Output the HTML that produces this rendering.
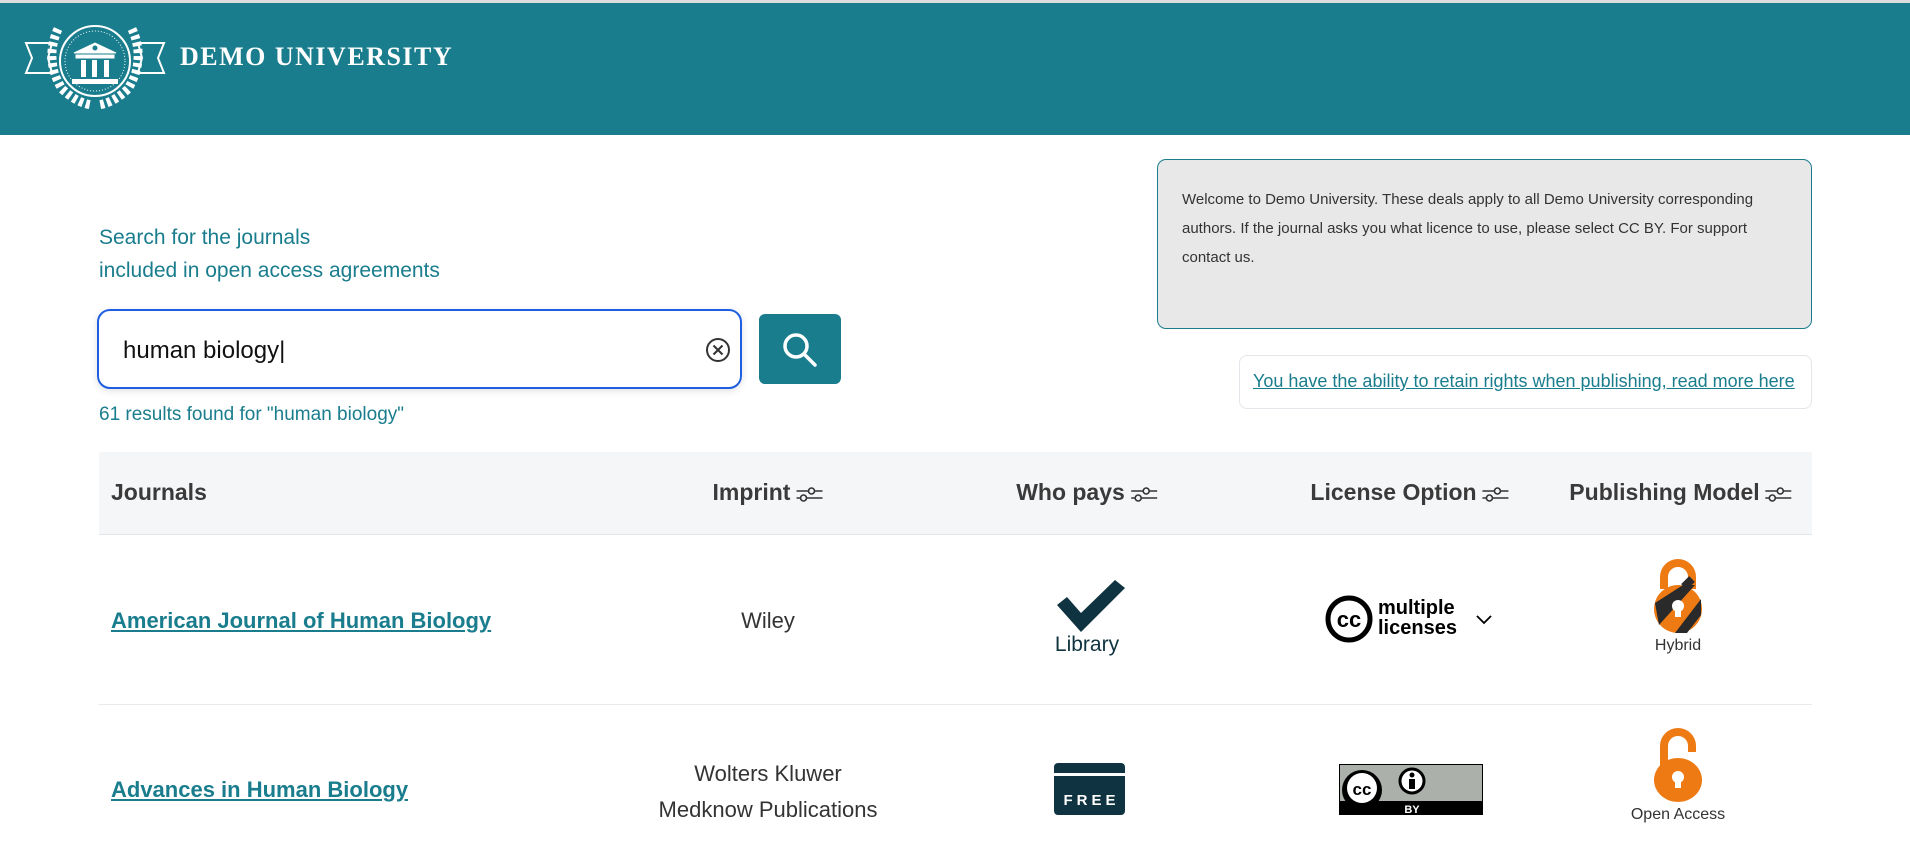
<!DOCTYPE html>
<html><head><meta charset="utf-8"><style>
*{margin:0;padding:0;box-sizing:border-box}
body{width:1910px;height:857px;overflow:hidden;background:#fff;font-family:"Liberation Sans",sans-serif;position:relative;color:#333}
.a{position:absolute}
.hdr{left:0;top:0;width:1910px;height:135px;background:#1a7d8d;border-top:3px solid #ddd}
.th{font-size:23px;font-weight:bold;color:#3a3a3a;top:479px;white-space:nowrap}
.c{transform:translateX(-50%);text-align:center;white-space:nowrap}
.lnk{color:#1a7d8d;font-weight:bold;font-size:22px;text-decoration:underline;left:111px}
.sl{display:inline-block;vertical-align:middle;margin-left:5px}
</style></head><body>
<div class="a hdr"></div>
<svg class="a" style="left:24px;top:15px" width="142" height="95" viewBox="0 0 142 95" fill="none" stroke="#fff">
<path d="M2 28h26l-4 15 4 15H2l6-15z" fill="#1a7d8d" stroke-width="2"/>
<path d="M140 28h-26l4 15-4 15h26l-6-15z" fill="#1a7d8d" stroke-width="2"/>
<path d="M34 14q-14 30 4 60q15 14 30 16M108 14q14 30-4 60q-15 14-30 16" stroke-width="9" stroke-dasharray="4 3"/>
<circle cx="71" cy="46" r="38" fill="#1a7d8d" stroke="none"/>
<circle cx="71" cy="46" r="35" stroke-width="2"/>
<circle cx="71" cy="46" r="30" stroke-width="1" stroke-dasharray="1 2"/>
<path d="M50 38l21-10 21 10z" fill="#fff"/>
<circle cx="71" cy="33" r="3" fill="#1a7d8d"/>
<rect x="52" y="40" width="38" height="3" fill="#fff"/>
<rect x="57" y="45" width="5" height="17" fill="#fff" stroke="none"/><rect x="68" y="45" width="5" height="17" fill="#fff" stroke="none"/><rect x="80" y="45" width="5" height="17" fill="#fff" stroke="none"/>
<rect x="48" y="64" width="46" height="5" fill="#fff" stroke="none"/>
</svg>
<div class="a" style="left:180px;top:42px;color:#fff;font-family:'Liberation Serif',serif;font-size:26px;font-weight:bold;letter-spacing:1.5px">DEMO UNIVERSITY</div>

<div class="a" style="left:99px;top:221px;color:#1a7d8d;font-size:21px;line-height:33px">Search for the journals<br>included in open access agreements</div>
<div class="a" style="left:97px;top:309px;width:645px;height:80px;border:2px solid #1d5fe0;border-radius:13px;box-shadow:0 2px 8px rgba(0,0,0,.12)"></div>
<div class="a" style="left:123px;top:337px;font-size:24px;color:#111">human biology|</div>
<svg class="a" style="left:705px;top:337px" width="26" height="26" viewBox="0 0 26 26" fill="none" stroke="#333" stroke-width="2"><circle cx="13" cy="13" r="11"/><path d="M8.5 8.5l9 9M17.5 8.5l-9 9"/></svg>
<div class="a" style="left:759px;top:314px;width:82px;height:70px;background:#1a7d8d;border-radius:6px"></div>
<svg class="a" style="left:780px;top:330px" width="40" height="40" viewBox="0 0 40 40" fill="none" stroke="#fff" stroke-width="3.5"><circle cx="16" cy="16" r="11"/><path d="M24 24l11 11" stroke-linecap="round"/></svg>
<div class="a" style="left:99px;top:404px;font-size:19px;color:#1a7d8d">61 results found for "human biology"</div>

<div class="a" style="left:1157px;top:159px;width:655px;height:170px;background:#e8e8e8;border:1px solid #1a7d8d;border-radius:9px;padding:25px 24px;font-size:15px;line-height:29px;color:#333">Welcome to Demo University. These deals apply to all Demo University corresponding authors. If the journal asks you what licence to use, please select CC BY. For support contact us.</div>
<div class="a" style="left:1239px;top:355px;width:573px;height:54px;border:1px solid #e3e6ea;border-radius:8px;padding:15px 0 0 13px;font-size:18px;color:#1a7d8d;text-decoration:underline">You have the ability to retain rights when publishing, read more here</div>

<div class="a" style="left:99px;top:452px;width:1713px;height:83px;background:#f5f6f8;border-bottom:1px solid #e3e6ea"></div>
<div class="a th" style="left:111px">Journals</div>
<div class="a th c" style="left:768px">Imprint<svg class="sl" width="28" height="20" viewBox="0 0 28 20" fill="none" stroke="#333" stroke-width="1.6"><path d="M1 7h12M19 7h8M1 14h4M11 14h16"/><circle cx="16" cy="7" r="3"/><circle cx="8" cy="14" r="3"/></svg></div>
<div class="a th c" style="left:1087px">Who pays<svg class="sl" width="28" height="20" viewBox="0 0 28 20" fill="none" stroke="#333" stroke-width="1.6"><path d="M1 7h12M19 7h8M1 14h4M11 14h16"/><circle cx="16" cy="7" r="3"/><circle cx="8" cy="14" r="3"/></svg></div>
<div class="a th c" style="left:1410px">License Option<svg class="sl" width="28" height="20" viewBox="0 0 28 20" fill="none" stroke="#333" stroke-width="1.6"><path d="M1 7h12M19 7h8M1 14h4M11 14h16"/><circle cx="16" cy="7" r="3"/><circle cx="8" cy="14" r="3"/></svg></div>
<div class="a th c" style="left:1681px">Publishing Model<svg class="sl" width="28" height="20" viewBox="0 0 28 20" fill="none" stroke="#333" stroke-width="1.6"><path d="M1 7h12M19 7h8M1 14h4M11 14h16"/><circle cx="16" cy="7" r="3"/><circle cx="8" cy="14" r="3"/></svg></div>

<div class="a" style="left:99px;top:704px;width:1713px;height:1px;background:#e8eaed"></div>

<div class="a lnk" style="top:608px">American Journal of Human Biology</div>
<div class="a c" style="left:768px;top:608px;font-size:22px">Wiley</div>
<svg class="a" style="left:1057px;top:580px" width="68" height="52" viewBox="0 0 68 52"><path d="M0 25l10-8 14 16L58 0l10 8-44 44z" fill="#0f3340"/></svg>
<div class="a c" style="left:1087px;top:633px;font-size:21px;color:#0f3340">Library</div>
<svg class="a" style="left:1325px;top:594px" width="50" height="50" viewBox="0 0 50 50"><circle cx="24" cy="25" r="21" fill="#fff" stroke="#000" stroke-width="5"/><text x="24" y="33" text-anchor="middle" font-family="Liberation Sans" font-weight="bold" font-size="22">cc</text></svg>
<div class="a" style="left:1378px;top:598px;font-size:20px;font-weight:bold;line-height:20px;color:#000">multiple<br>licenses</div>
<svg class="a" style="left:1476px;top:614px" width="16" height="12" viewBox="0 0 16 12" fill="none" stroke="#000" stroke-width="1.8"><path d="M1 2l7 7 7-7"/></svg>
<svg class="a" style="left:1653px;top:559px" width="50" height="74" viewBox="0 0 50 74"><path d="M11 30V18a14 14 0 0 1 28 0v12" fill="none" stroke="#ee7a14" stroke-width="8"/><ellipse cx="25" cy="50" rx="24" ry="24" fill="#ee7a14"/><path d="M2 44L30 26h12L6 66zM22 74L48 40v16L34 74z" fill="#2a2a2a"/><path d="M39 20l-8 8" stroke="#2a2a2a" stroke-width="8"/><circle cx="25" cy="47" r="6" fill="#fff"/><rect x="22" y="47" width="6" height="11" fill="#fff"/></svg>
<div class="a c" style="left:1678px;top:637px;font-size:16px;color:#333">Hybrid</div>

<div class="a lnk" style="top:777px">Advances in Human Biology</div>
<div class="a c" style="left:768px;top:756px;font-size:22px;line-height:36px">Wolters Kluwer<br>Medknow Publications</div>
<div class="a" style="left:1054px;top:763px;width:71px;height:52px;background:#0f3340;border-radius:4px"></div>
<div class="a" style="left:1054px;top:773px;width:71px;height:3px;background:#fff"></div>
<div class="a" style="left:1054px;top:792px;width:71px;text-align:center;color:#fff;font-weight:bold;font-size:15px;letter-spacing:4px;padding-left:4px">FREE</div>
<svg class="a" style="left:1339px;top:764px" width="144" height="51" viewBox="0 0 144 51"><rect x="0" y="0" width="144" height="51" fill="#abb1aa" stroke="#000" stroke-width="2"/><rect x="0" y="37" width="144" height="14" fill="#000"/><circle cx="23" cy="26" r="20" fill="#000"/><circle cx="23" cy="24" r="15" fill="#fff"/><text x="23" y="31" text-anchor="middle" font-family="Liberation Sans" font-weight="bold" font-size="17">cc</text><circle cx="73" cy="17" r="12" fill="#fff" stroke="#000" stroke-width="3"/><circle cx="73" cy="11" r="2.5"/><rect x="70" y="15" width="6" height="10"/><text x="73" y="49" text-anchor="middle" font-family="Liberation Sans" font-weight="bold" font-size="11" fill="#fff">BY</text></svg>
<svg class="a" style="left:1653px;top:728px" width="50" height="74" viewBox="0 0 50 74"><path d="M11 44V18a14 14 0 0 1 28 0v6" fill="none" stroke="#ee7a14" stroke-width="8"/><ellipse cx="25" cy="52" rx="24" ry="22" fill="#ee7a14"/><circle cx="25" cy="49" r="6" fill="#fff"/><rect x="22" y="49" width="6" height="11" fill="#fff"/></svg>
<div class="a c" style="left:1678px;top:806px;font-size:16px;color:#333">Open Access</div>
</body></html>
